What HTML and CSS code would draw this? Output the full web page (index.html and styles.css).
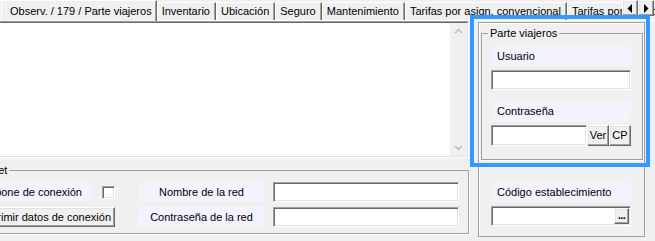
FILE: index.html
```html
<!DOCTYPE html>
<html lang="es">
<head>
<meta charset="utf-8">
<title>Parte viajeros</title>
<link rel="stylesheet" href="styles.css">
</head>
<body>
<div class="window">
  <div class="tabs">
    <div class="tab active">Observ. / 179 / Parte viajeros</div>
    <div class="tab">Inventario</div>
    <div class="tab">Ubicación</div>
    <div class="tab">Seguro</div>
    <div class="tab">Mantenimiento</div>
    <div class="tab">Tarifas por asign. convencional</div>
    <div class="tab">Tarifas por temporada</div>
  </div>
  <div class="tab-scroll">
    <div class="btn arrow"><svg width="14" height="13" viewBox="0 0 14 13"><polygon points="9,2 9,11 4.5,6.5" fill="#000"/></svg></div>
    <div class="btn arrow"><svg width="14" height="13" viewBox="0 0 14 13"><polygon points="5,2 5,11 9.5,6.5" fill="#000"/></svg></div>
  </div>

  <div class="page">
    <div class="left">
      <div class="memo">
        <div class="memo-inner">
          <div class="memo-text"></div>
          <div class="vscroll">
            <svg width="17" height="17" viewBox="0 0 17 17"><polyline points="5,10 8.5,6.5 12,10" fill="none" stroke="#bfbfbf" stroke-width="1.6"/></svg>
            <svg width="17" height="17" viewBox="0 0 17 17"><polyline points="5,7 8.5,10.5 12,7" fill="none" stroke="#bfbfbf" stroke-width="1.6"/></svg>
          </div>
        </div>
      </div>
      <fieldset class="group internet">
        <legend>Internet</legend>
        <div class="net-grid">
          <div class="cell-check">
            <div class="lbl right conn">Dispone de conexión</div>
            <span class="check"></span>
          </div>
          <div class="lbl center">Nombre de la red</div>
          <div class="input"></div>
          <div class="btn print">Imprimir datos de conexión</div>
          <div class="lbl center">Contraseña de la red</div>
          <div class="input"></div>
        </div>
      </fieldset>
    </div>

    <div class="panel">
      <fieldset class="group parte">
        <legend>Parte viajeros</legend>
        <div class="lbl">Usuario</div>
        <div class="input gap-s"></div>
        <div class="lbl gap-l">Contraseña</div>
        <div class="pass-row gap-s">
          <div class="input pass"></div>
          <div class="btn small">Ver</div>
          <div class="btn small">CP</div>
        </div>
      </fieldset>
      <div class="codigo">
        <div class="lbl">Código establecimiento</div>
        <div class="input with-btn gap-s"><div class="btn dots">...</div></div>
      </div>
    </div>
  </div>

  <div class="highlight"></div>
</div>
</body>
</html>
```

FILE: styles.css
```css
* { box-sizing: border-box; }
html, body { margin: 0; padding: 0; }
body {
  width: 655px;
  height: 241px;
  overflow: hidden;
  background: #f0f0f0;
  font: 11px/13px "Liberation Sans", Arial, sans-serif;
  color: #000;
}
.window {
  position: relative;
  width: 655px;
  height: 241px;
  overflow: hidden;
}

/* tabs */
.tabs {
  display: flex;
  align-items: flex-end;
  height: 21px;
  padding-left: 1px;
  border-bottom: 1px solid #fff;
  white-space: nowrap;
}
.tab {
  flex: none;
  height: 18px;
  padding: 2px 5px 0 4px;
  border-top: 1px solid #fff;
  border-left: 1px solid #fff;
  border-right: 1px solid #696969;
  box-shadow: inset -1px 0 #a0a0a0;
}
.tab.active {
  height: 21px;
  margin-bottom: -1px;
  padding: 4px 4px 0 8px;
  position: relative;
  z-index: 1;
  background: #f0f0f0;
}
.tab-scroll {
  position: absolute;
  top: 0;
  right: 1px;
  display: flex;
  z-index: 2;
}

/* buttons */
.btn {
  display: flex;
  align-items: center;
  justify-content: center;
  background: #f0f0f0;
  border: 1px solid;
  border-color: #fff #696969 #696969 #fff;
  box-shadow: inset -1px -1px #a0a0a0, inset 1px 1px #e3e3e3;
  white-space: nowrap;
}
.btn.arrow { width: 16px; height: 16px; }

/* page */
.page {
  display: flex;
  gap: 9px;
}
.left { width: 469px; flex: none; }

.memo {
  margin-left: -2px;
  width: 471px;
  height: 137px;
  border: 1px solid;
  border-color: #a0a0a0 #fff #fff #a0a0a0;
}
.memo-inner {
  height: 100%;
  display: flex;
  border: 1px solid;
  border-color: #696969 #e3e3e3 #e3e3e3 #696969;
  background: #fff;
}
.memo-text { flex: 1; }
.vscroll {
  width: 17px;
  background: #f0f0f0;
  display: flex;
  flex-direction: column;
  justify-content: space-between;
}
.vscroll svg { display: block; }

.group {
  margin: 0;
  border: 1px solid #a0a0a0;
  box-shadow: 1px 1px 0 #fff;
  min-width: 0;
}
.group legend {
  padding: 0 2px;
  line-height: 13px;
}

.internet {
  margin: 6px 0 0 -46px;
  width: 515px;
  padding: 5px 9px 6px 4px;
}
.internet legend { margin-left: 9px; }
.net-grid {
  display: grid;
  grid-template-columns: 171px 127px 186px;
  column-gap: 8px;
  row-gap: 5px;
  grid-auto-rows: 20px;
}
.cell-check {
  display: flex;
  align-items: center;
}
.conn { width: 127px; margin-left: 7px; flex: none; }
.check {
  margin-left: 9px;
  width: 13px;
  height: 13px;
  background: #fff;
  border: 1px solid;
  border-color: #a0a0a0 #fff #fff #a0a0a0;
  box-shadow: inset 1px 1px #696969, inset -1px -1px #e3e3e3;
}
.btn.print { width: 156px; padding-left: 16px; }

.lbl {
  height: 20px;
  line-height: 20px;
  padding-left: 6px;
  background: #f3f3fe;
  border-radius: 5px;
  white-space: nowrap;
}
.lbl.right { padding: 0 11px 0 0; text-align: right; }
.lbl.center { padding: 0; text-align: center; }

.input {
  height: 20px;
  background: #fff;
  border: 1px solid;
  border-color: #a0a0a0 #fff #fff #a0a0a0;
  box-shadow: inset 1px 1px #696969, inset -1px -1px #e3e3e3;
}

/* right panel */
.panel {
  flex: none;
  width: 167px;
  height: 215px;
  margin-top: 1px;
  padding: 4px 2px 0 2px;
  border: 1px solid #a0a0a0;
  box-shadow: inset 1px 1px #fff;
}
.parte {
  width: 162px;
  padding: 6px 11px 13px 9px;
}
.parte legend { margin-left: -3px; }
.gap-s { margin-top: 4px; }
.gap-l { margin-top: 11px; }
.pass-row {
  display: flex;
  height: 21px;
}
.pass { flex: 1; height: 21px; }
.btn.small { width: 22px; }

.codigo {
  margin: 22px 11px 0 10px;
}
.with-btn {
  display: flex;
  justify-content: flex-end;
  padding: 1px;
}
.btn.dots {
  width: 15px;
  height: 16px;
  font-weight: bold;
  line-height: 10px;
  align-items: flex-start;
  padding-top: 1px;
  letter-spacing: -0.5px;
}

.highlight {
  position: absolute;
  left: 470px;
  top: 15px;
  width: 180px;
  height: 152px;
  border: 4px solid #3399ff;
  z-index: 3;
  pointer-events: none;
}
```
